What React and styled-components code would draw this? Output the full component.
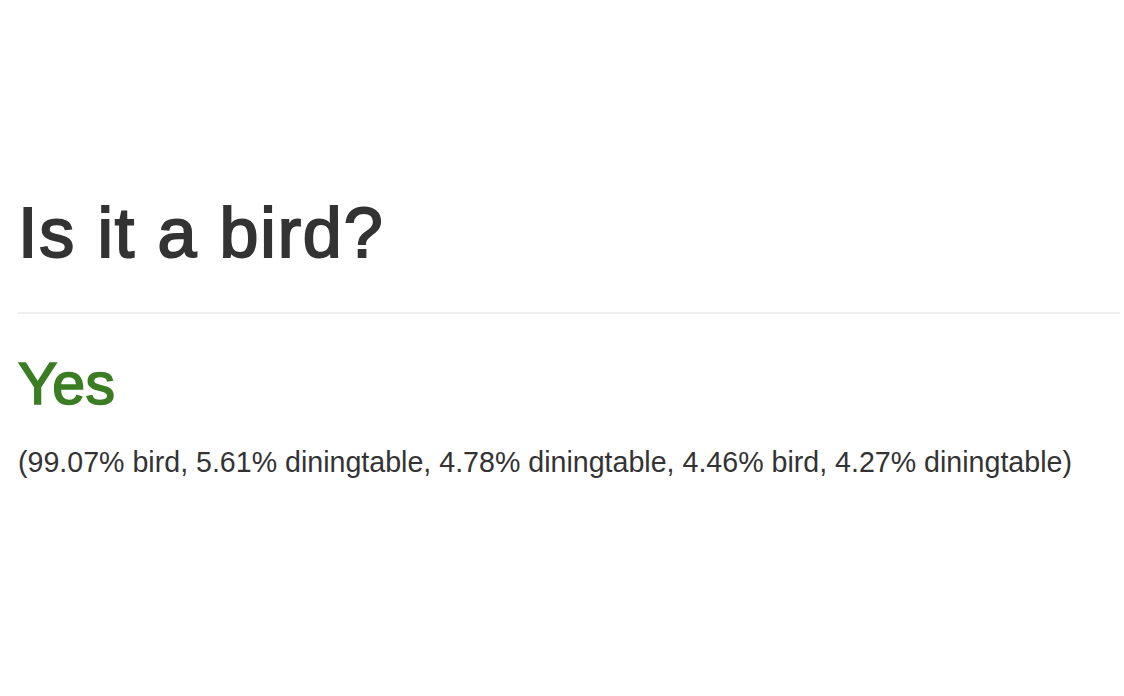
import React from 'react';
import styled, { createGlobalStyle } from 'styled-components';

const GlobalStyle = createGlobalStyle`
  html, body {
    margin: 0;
    padding: 0;
    background: #fff;
  }
  body {
    font-family: "Liberation Sans", Arial, Helvetica, sans-serif;
    color: #333;
  }
`;

const scores = [
  { pct: '99.07', label: 'bird' },
  { pct: '5.61', label: 'diningtable' },
  { pct: '4.78', label: 'diningtable' },
  { pct: '4.46', label: 'bird' },
  { pct: '4.27', label: 'diningtable' },
];

const App = () => {
  const summary = scores.map((s) => `${s.pct}% ${s.label}`).join(', ');

  return (
    <>
      <GlobalStyle />
      <Page>
        <Header>
          <Title>Is it a bird?</Title>
        </Header>
        <Answer>Yes</Answer>
        <Details>({summary})</Details>
      </Page>
    </>
  );
};

export default App;

// Styled Components
const Page = styled.main`
  display: flex;
  flex-direction: column;
  padding: 195px 4px 0 18px;
`;

const Header = styled.div`
  padding-bottom: 40px;
  border-bottom: 2px solid #eee;
`;

// medium weight: regular face thickened a little
const Title = styled.h1`
  margin: 0;
  font-size: 70px;
  font-weight: 400;
  line-height: 1.1;
  letter-spacing: 1.85px;
  -webkit-text-stroke: 2px #333;
  color: #333;
`;

const Answer = styled.h2`
  margin: 38px 0 0;
  font-size: 59px;
  font-weight: 400;
  line-height: 1.1;
  letter-spacing: 0.4px;
  -webkit-text-stroke: 1.7px #3b7d23;
  color: #3b7d23;
`;

const Details = styled.p`
  margin: 25px 0 0;
  font-size: 28.6px;
  line-height: 1.4;
  color: #333;
`;
